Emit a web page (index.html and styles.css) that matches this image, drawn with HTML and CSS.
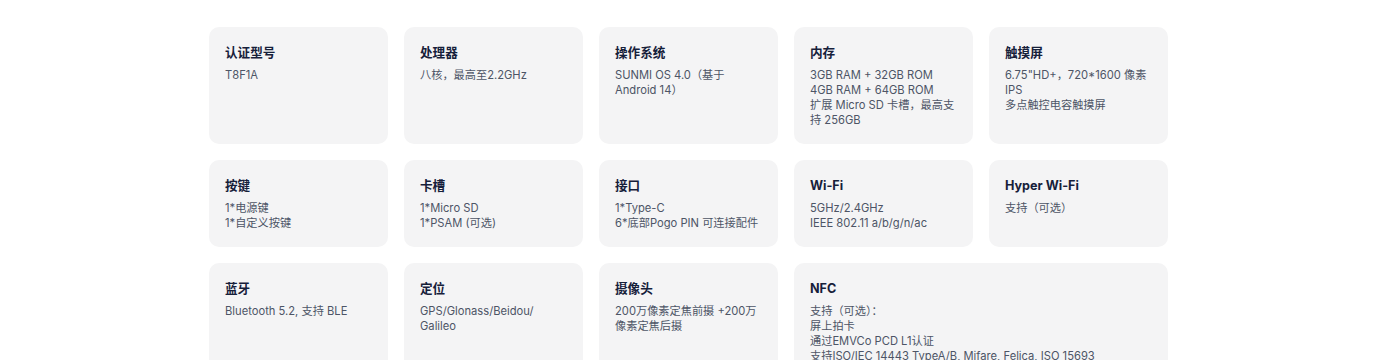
FILE: index.html
```html
<!DOCTYPE html>
<html lang="zh-CN">
<head>
<meta charset="utf-8">
<title>规格参数</title>
<link rel="stylesheet" href="styles.css">
</head>
<body>
<div class="page">
  <div class="spec-grid">
    <div class="card"><div class="title">认证型号</div><div class="body">T8F1A</div></div>
    <div class="card"><div class="title">处理器</div><div class="body">八核，最高至2.2GHz</div></div>
    <div class="card"><div class="title">操作系统</div><div class="body">SUNMI OS 4.0（基于<br>Android 14）</div></div>
    <div class="card"><div class="title">内存</div><div class="body">3GB RAM + 32GB ROM<br>4GB RAM + 64GB ROM<br>扩展 Micro SD 卡槽，最高支<br>持 256GB</div></div>
    <div class="card"><div class="title">触摸屏</div><div class="body">6.75"HD+，720*1600 像素<br>IPS<br>多点触控电容触摸屏</div></div>

    <div class="card"><div class="title">按键</div><div class="body">1*电源键<br>1*自定义按键</div></div>
    <div class="card"><div class="title">卡槽</div><div class="body">1*Micro SD<br>1*PSAM (可选)</div></div>
    <div class="card"><div class="title">接口</div><div class="body">1*Type-C<br>6*底部Pogo PIN 可连接配件</div></div>
    <div class="card"><div class="title">Wi-Fi</div><div class="body">5GHz/2.4GHz<br>IEEE 802.11 a/b/g/n/ac</div></div>
    <div class="card"><div class="title">Hyper Wi-Fi</div><div class="body">支持（可选）</div></div>

    <div class="card"><div class="title">蓝牙</div><div class="body">Bluetooth 5.2, 支持 BLE</div></div>
    <div class="card"><div class="title">定位</div><div class="body">GPS/Glonass/Beidou/<br>Galileo</div></div>
    <div class="card"><div class="title">摄像头</div><div class="body">200万像素定焦前摄 +200万<br>像素定焦后摄</div></div>
    <div class="card wide"><div class="title">NFC</div><div class="body">支持（可选）：<br>屏上拍卡<br>通过EMVCo PCD L1认证<br>支持ISO/IEC 14443 TypeA/B, Mifare, Felica, ISO 15693</div></div>
  </div>
</div>
</body>
</html>
```
FILE: styles.css
```css
html, body {
  margin: 0;
  padding: 0;
  background: #ffffff;
}

.page {
  padding: 27px 0 0 209px;
  font-family: "Inter", "Noto Sans CJK SC", sans-serif;
}

.spec-grid {
  width: 959px;
  display: grid;
  grid-template-columns: repeat(5, 179px);
  column-gap: 16px;
  row-gap: 16px;
}

.card {
  background: #f4f4f5;
  border-radius: 10px;
  padding: 16px 16px 16px 16px;
}

.card.wide {
  grid-column: span 2;
}

.title {
  font-size: 12.6px;
  line-height: 19px;
  font-weight: 700;
  color: #16203a;
  margin-bottom: 6px;
}

.body {
  font-size: 11.2px;
  line-height: 15px;
  color: #4d5566;
}
```
